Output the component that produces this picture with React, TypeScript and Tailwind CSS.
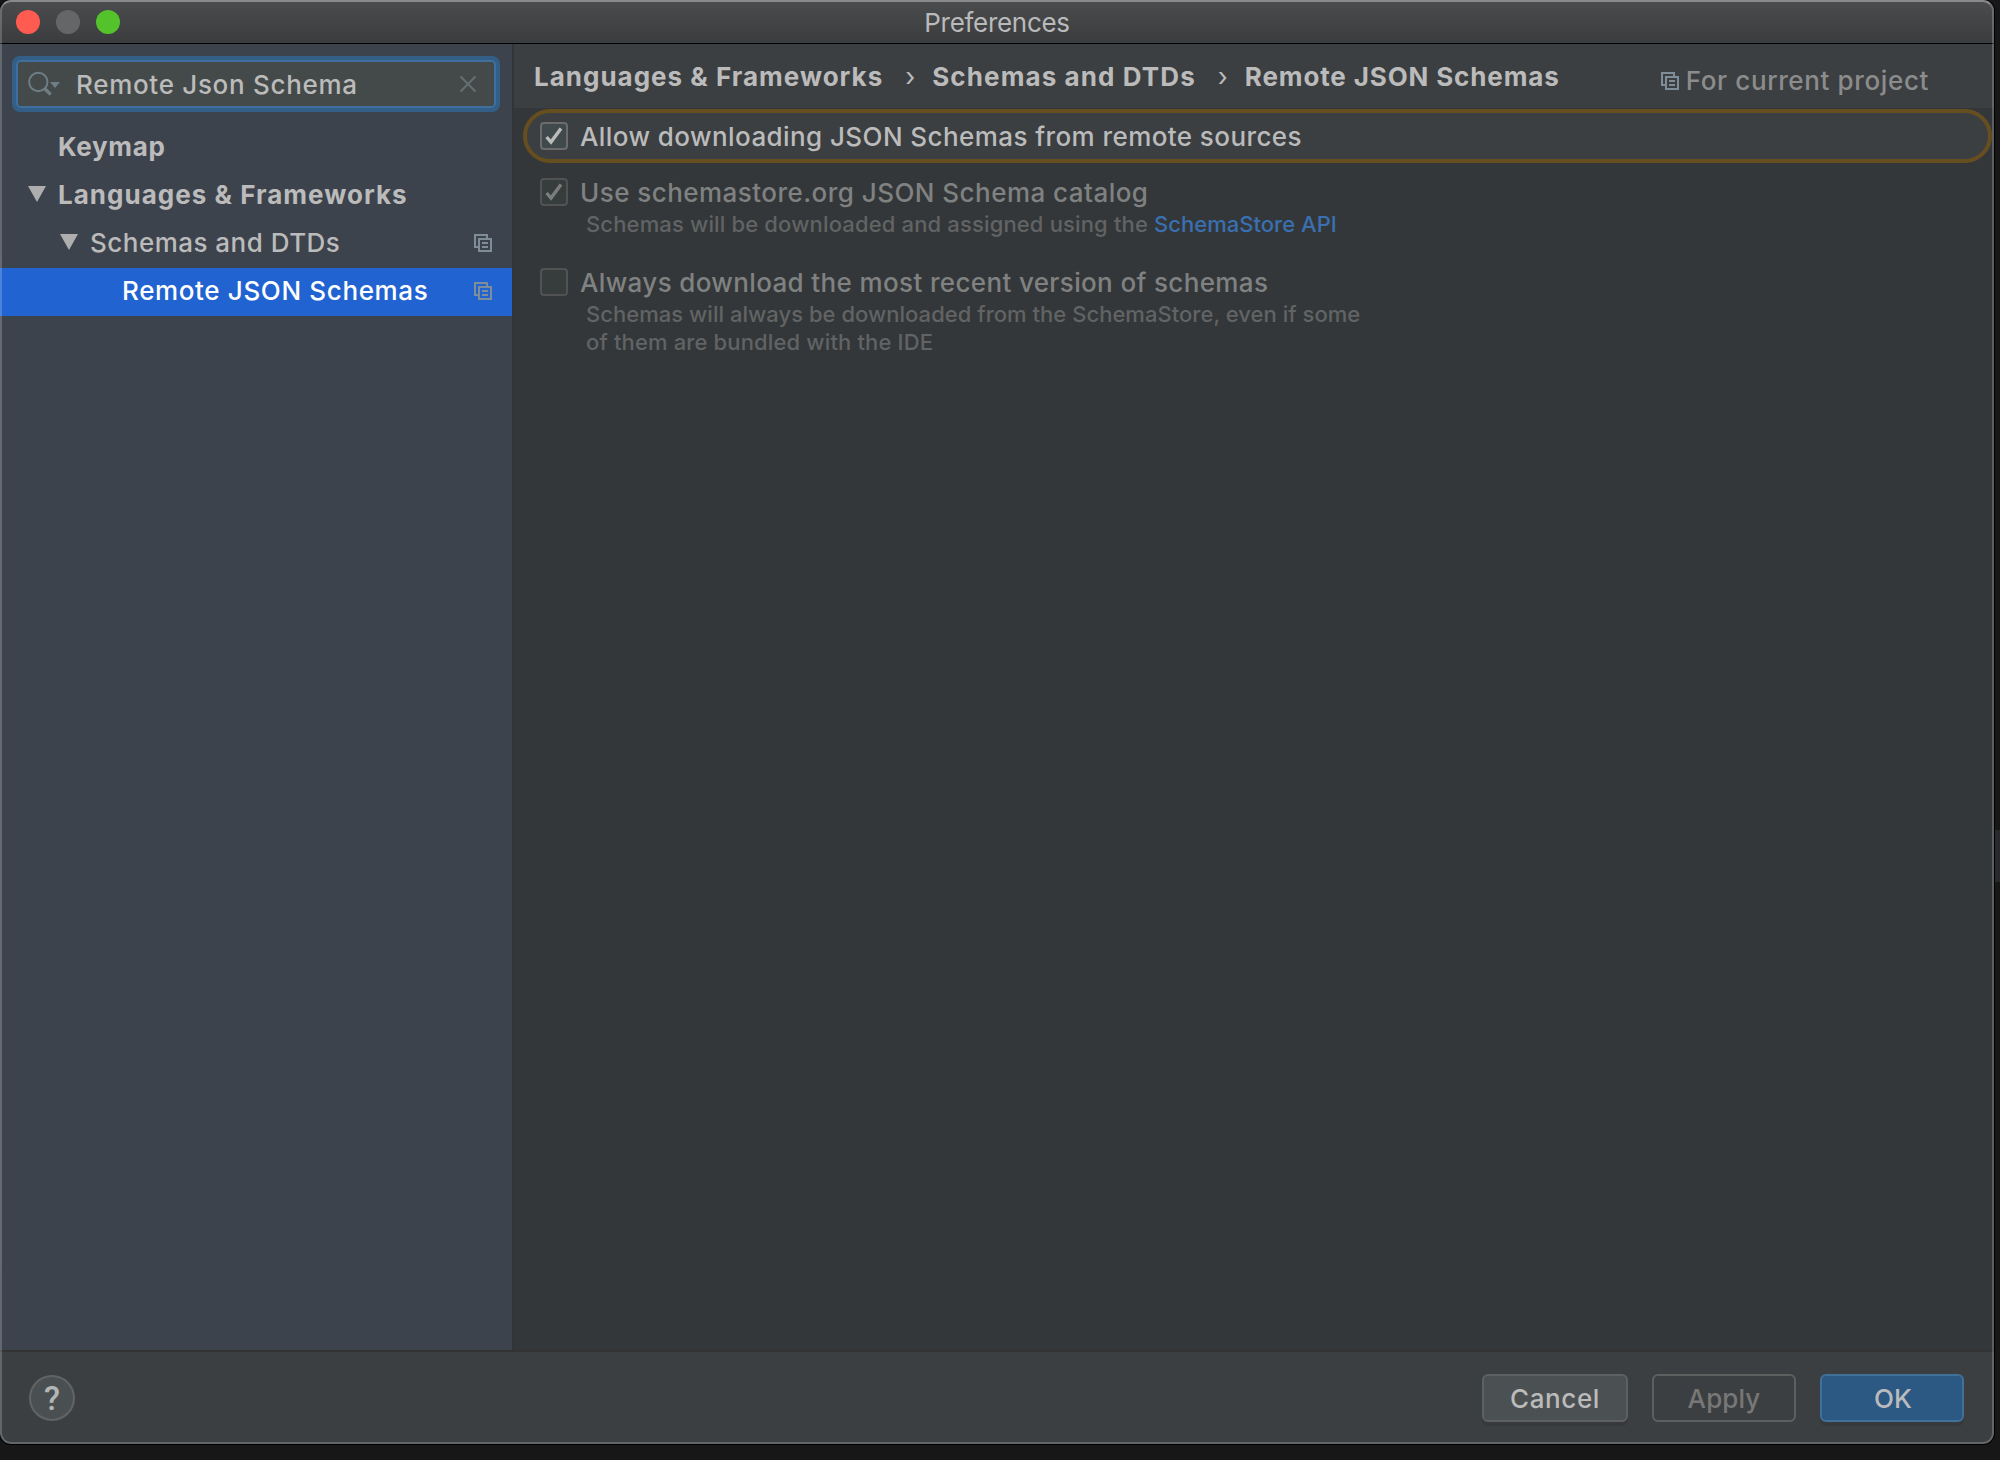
import { useState } from "react";

const TREE = [
  { label: "Keymap", style: "pl-[58px] font-bold tracking-[0.65px]", arrow: false, project: false },
  { label: "Languages & Frameworks", style: "pl-[28px] font-bold tracking-[1.02px]", arrow: true, project: false },
  { label: "Schemas and DTDs", style: "pl-[60px] tracking-[0.48px]", arrow: true, project: true },
  { label: "Remote JSON Schemas", style: "pl-[122px] tracking-[0.64px]", arrow: false, project: true },
];

const CRUMBS = [
  { label: "Languages & Frameworks", style: "tracking-[1px]" },
  { label: "Schemas and DTDs", style: "tracking-[1.1px]" },
  { label: "Remote JSON Schemas", style: "tracking-[0.86px]" },
];

function ProjectIcon() {
  return (
    <svg width="18" height="18" viewBox="0 0 18 18" fill="none" stroke="#7e8d97" strokeWidth="2" className="shrink-0">
      <path d="M13 4V1H1v12h3" />
      <rect x="5" y="5" width="12" height="12" />
      <path d="M8 9h6M8 13h6" />
    </svg>
  );
}

function TreeArrow() {
  return (
    <svg width="18" height="16" viewBox="0 0 18 16" fill="#aeaeae" className="mr-[12px] mb-[2px] shrink-0">
      <path d="M0 0h18L9 16z" />
    </svg>
  );
}

function Checkbox({
  checked,
  disabled,
  onChange,
}: {
  checked: boolean;
  disabled?: boolean;
  onChange?: () => void;
}) {
  return (
    <button
      role="checkbox"
      aria-checked={checked}
      disabled={disabled}
      onClick={onChange}
      className={`flex h-[28px] w-[28px] shrink-0 rounded-[4px] border-2 ${
        disabled ? "border-[#505352] bg-[#373d3c]" : "border-[#6b6c6b] bg-[#40494b]"
      }`}
    >
      {checked && (
        <svg
          width="24"
          height="24"
          viewBox="2 2 24 24"
          fill="none"
          stroke={disabled ? "#7b7d7d" : "#bbbbbb"}
          strokeWidth="3.4"
        >
          <path d="M6.6 15 11 20 21 6.4" />
        </svg>
      )}
    </button>
  );
}

export default function App() {
  const [query, setQuery] = useState("Remote Json Schema");
  const [selected, setSelected] = useState("Remote JSON Schemas");
  const [allow, setAllow] = useState(true);

  return (
    <div className="relative h-[1460px] w-[2000px] overflow-hidden bg-[#171717] font-['Inter',sans-serif] text-[26px] leading-[32px] font-[450] text-[#bbbbbb]">
      <div className="absolute top-[830px] right-0 h-[52px] w-[5px] bg-[#27292c]" />

      <div className="relative flex h-[1444px] w-[1994px] flex-col overflow-hidden rounded-[11px] bg-[#3c3f41] shadow-[0_0_0_1px_#000]">
        <header className="relative flex h-[44px] shrink-0 items-center justify-center border-b border-black bg-linear-to-b from-[#4b4c4e] to-[#3b3c3d] pt-[3px]">
          <div className="absolute top-[10px] left-[16px] flex gap-[16px]">
            <span className="h-[24px] w-[24px] rounded-full bg-[#ff5b51]" />
            <span className="h-[24px] w-[24px] rounded-full bg-[#656667]" />
            <span className="h-[24px] w-[24px] rounded-full bg-[#54c22b]" />
          </div>
          <h1 className="font-normal tracking-[-0.3px] text-[#b9babb]">Preferences</h1>
        </header>

        <div className="flex min-h-0 flex-1">
          <aside className="flex w-[514px] shrink-0 flex-col border-r-2 border-[#323437] bg-[#3d434c] pt-[12px]">
            <div className="mx-[12px] flex h-[56px] w-[488px] shrink-0 rounded-[8px] bg-[#335f87] p-1">
              <div className="flex min-w-0 flex-1 items-center rounded-[5px] border-2 border-[#3d70a1] bg-[#444a49]">
                <svg width="34" height="28" viewBox="0 0 34 28" className="ml-[9px] shrink-0" fill="none">
                  <circle cx="11.3" cy="12" r="9.2" stroke="#6f7d86" strokeWidth="1.9" />
                  <path d="M17.5 18.5 23.7 24.5" stroke="#6f7d86" strokeWidth="3.2" />
                  <path d="M23 12h10l-5 6z" fill="#6f7d86" />
                </svg>
                <input
                  value={query}
                  onChange={(e) => setQuery(e.target.value)}
                  className="ml-[15px] min-w-0 flex-1 bg-transparent pt-[2px] tracking-[0.7px] outline-none"
                />
                <button aria-label="Clear" onClick={() => setQuery("")} className="mr-[17px] shrink-0">
                  <svg width="18" height="18" viewBox="0 0 18 18" stroke="#656e71" strokeWidth="2">
                    <path d="M1.5 1.5l15 15M16.5 1.5l-15 15" />
                  </svg>
                </button>
              </div>
            </div>

            <ul className="mt-[12px]">
              {TREE.map((item) => (
                <li
                  key={item.label}
                  onClick={() => setSelected(item.label)}
                  className={`flex h-[48px] items-center ${item.style} ${
                    selected === item.label ? "bg-[#2163d1] text-white" : ""
                  }`}
                >
                  <div className="flex flex-1 items-center pb-[2px]">
                    {item.arrow && <TreeArrow />}
                    {item.label}
                  </div>
                  {item.project && (
                    <span className="mr-[20px] pb-[2px]">
                      <ProjectIcon />
                    </span>
                  )}
                </li>
              ))}
            </ul>
          </aside>

          <main className="min-w-0 flex-1 bg-[#333739]">
            <div className="flex h-[64px] items-center bg-[#3c3f41] pl-[20px]">
              <nav className="flex pt-[2px] font-bold whitespace-nowrap">
                {CRUMBS.map((crumb, i) => (
                  <div key={crumb.label} className="flex">
                    {i > 0 && <span className="w-[49px] pl-[5px] text-center font-normal">›</span>}
                    <span className={crumb.style}>{crumb.label}</span>
                  </div>
                ))}
              </nav>
              <div className="mr-[65px] ml-auto flex items-center gap-[7px] pt-[9px] tracking-[0.63px] text-[#8c8c8c]">
                <ProjectIcon />
                For current project
              </div>
            </div>

            <div className="mt-[1px] ml-[9px] flex h-[54px] w-[1469px] items-center gap-[12px] rounded-full border-4 border-[#664e20] bg-[#3c3f41] pl-[13px]">
              <Checkbox checked={allow} onChange={() => setAllow(!allow)} />
              <span className="pt-[2px] tracking-[0.42px]">Allow downloading JSON Schemas from remote sources</span>
            </div>

            <div className="mt-[15px] ml-[26px] flex items-start gap-[12px] text-[#808181]">
              <Checkbox checked disabled />
              <div>
                <p className="-mt-px mb-px tracking-[0.46px]">Use schemastore.org JSON Schema catalog</p>
                <p className="ml-[6px] text-[22px] leading-[28px] tracking-[0.15px] text-[#616364]">
                  Schemas will be downloaded and assigned using the{" "}
                  <a href="#" className="tracking-[0.02px] text-[#3a6fb0]">
                    SchemaStore API
                  </a>
                </p>
              </div>
            </div>

            <div className="mt-[30px] ml-[26px] flex items-start gap-[12px] text-[#808181]">
              <Checkbox checked={false} disabled />
              <div>
                <p className="-mt-px mb-px tracking-[0.36px]">Always download the most recent version of schemas</p>
                <p className="ml-[6px] text-[22px] leading-[28px] text-[#616364]">
                  <span className="block tracking-[0.03px]">
                    Schemas will always be downloaded from the SchemaStore, even if some
                  </span>
                  <span className="block tracking-[0.14px]">of them are bundled with the IDE</span>
                </p>
              </div>
            </div>
          </main>
        </div>

        <footer className="flex h-[94px] shrink-0 items-start border-t-2 border-[#333333] pt-[22px] pr-[30px] pl-[29px]">
          <button className="mt-[1px] flex h-[46px] w-[46px] items-center justify-center rounded-full border-2 border-[#626363] bg-[#4a5052] pt-[2px] font-['Roboto',sans-serif] text-[33px] font-medium text-[#b4b5b6]">
            ?
          </button>
          <button className="ml-auto h-[48px] w-[146px] rounded-[6px] border-2 border-[#5e6162] bg-[#4b5052] pt-[1px] tracking-[0.6px] shadow-[0_4px_0_#37393a]">
            Cancel
          </button>
          <button className="ml-[24px] h-[48px] w-[144px] rounded-[6px] border-2 border-[#5e6060] pt-[1px] tracking-[0.1px] text-[#777777]">
            Apply
          </button>
          <button className="ml-[24px] h-[48px] w-[144px] rounded-[6px] border-2 border-[#3f7199] bg-[#2c5884] pt-[1px] pl-[2px] shadow-[0_4px_0_#37393a]">
            OK
          </button>
        </footer>

        {/* translucent window edge */}
        <div className="pointer-events-none absolute inset-0 rounded-[11px] border-2 border-white/20 border-t-white/35" />
      </div>
    </div>
  );
}
